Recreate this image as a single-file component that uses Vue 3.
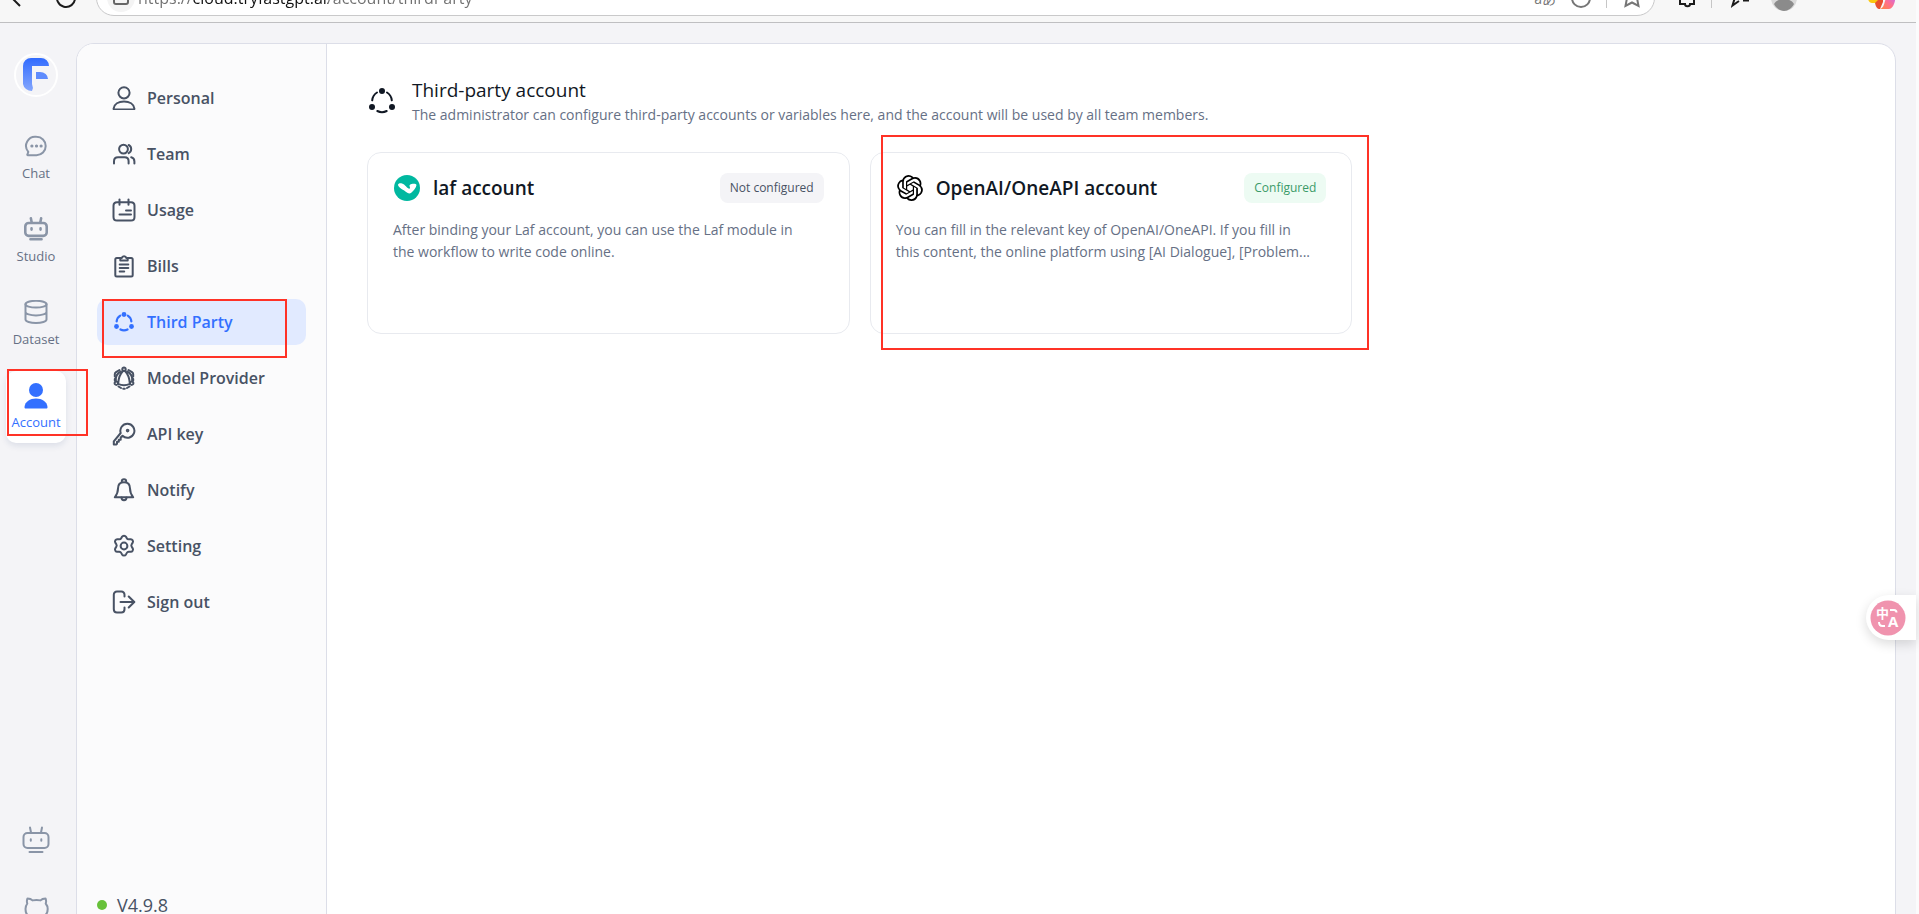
<script setup>
import { ref } from "vue";

const address = ref("https://cloud.tryfastgpt.ai/account/thirdParty");
const activeNav = ref("third");

// Outline icons, all drawn on a 24x24 box
const icons = {
  personal: ["M12 1.200a5.600 5.600 0 1 1 0 11.200 5.600 5.600 0 0 1 0-11.200z", "M1.600 22.600c.6-4.500 5-7 10.400-7s9.800 2.500 10.400 7c.1.600-.3 1-.9 1h-19c-.6 0-1-.4-.9-1z"],
  team: ["M11.500 2.700a4.400 4.400 0 1 1 0 8.800 4.400 4.400 0 0 1 0-8.800z", "M2 21.500v-2.300c0-2.500 1.600-4 4-4h6.600c2.400 0 4 1.500 4 4v2.300", "M16.700 3a4.600 4.600 0 0 1 0 8.200", "M19.200 15.200c2 .5 3.200 2 3.200 4.200v2"],
  usage: ["M5 4.200h14c2.400 0 3.500 1.300 3.500 3.500v11.200c0 2.200-1.100 3.600-3.500 3.600H5c-2.400 0-3.500-1.400-3.500-3.600V7.700c0-2.200 1.100-3.500 3.500-3.500z", "M7.500 1.500v5.200", "M16.500 1.500v5.200", "M14 12.500h5", "M7.500 16.500H19"],
  bills: ["M8 4H4.800c-.9 0-1.500.6-1.500 1.500v15.400c0 .9.600 1.500 1.500 1.500h14.400c.9 0 1.500-.6 1.500-1.500V5.500c0-.9-.6-1.500-1.500-1.500H16", "M8.300 6.500V4h1.500a2.300 2.300 0 0 1 4.500 0h1.400v2.500z", "M7.700 10.500h8.600", "M7.700 14h8.600", "M7.700 17.500h4.500"],
  model: [
    "M10.300 3.200a1.700 1.700 0 1 0 3.400 0 1.700 1.700 0 1 0-3.400 0z",
    "M2.600 17.200a1.700 1.700 0 1 0 3.400 0 1.700 1.700 0 1 0-3.400 0z",
    "M18 17.200a1.700 1.700 0 1 0 3.400 0 1.700 1.700 0 1 0-3.400 0z",
    "M7.500 4L4 6.200c-.8.500-1.200 1-1.200 2v2.300",
    "M16.500 4L20 6.200c.8.500 1.200 1 1.200 2v2.300",
    "M2.800 13v1.500M21.200 13v1.500",
    "M6.500 20.500L9 22M17.500 20.500L15 22M11.200 22.700h1.600",
    "M11 5C8.300 7.800 6.600 12 6.300 16.800",
    "M13 5c2.700 2.800 4.400 7 4.700 11.800",
    "M6 17.800c3.600 1.600 8.400 1.600 12 0",
    "M8.800 5.500C5 7.500 3.300 11 3.800 15",
    "M15.200 5.500C19 7.500 20.700 11 20.200 15",
  ],
  key: ["M15.300 1.800a7 7 0 1 1-4.800 12L8.700 15.500v2.200H6.800v2H5v2l-.8.8H1.800v-3.200L8.700 11A7 7 0 0 1 15.300 1.800z", "M15.600 7.800a.8.8 0 1 1 0 1.600.8.8 0 0 1 0-1.600z"],
  notify: ["M9.800 3.500a2.200 2.200 0 1 1 4.400 0", "M12 4.200c-4 0-6 2.600-6 6.300 0 4-1 6-3.200 8.800h18.400C19 16.500 18 14.500 18 10.500c0-3.700-2-6.300-6-6.300z", "M9.500 19.500a2.500 2.700 0 0 0 5 0"],
  setting: ["M12 8.600a3.400 3.400 0 1 1 0 6.800 3.400 3.400 0 0 1 0-6.800z", "M10 2.700c.8-1.400 3.200-1.400 4 0l.8 1.500c.4.800 1.300 1.200 2.200 1.100l1.700-.1c1.600-.1 2.900 2 2 3.400l-1 1.600c-.5.800-.5 1.800 0 2.600l1 1.600c.9 1.400-.4 3.500-2 3.400l-1.700-.1c-.9-.1-1.800.4-2.200 1.200l-.8 1.500c-.8 1.400-3.200 1.400-4 0l-.8-1.500c-.4-.8-1.300-1.300-2.200-1.200l-1.700.1c-1.600.1-2.900-2-2-3.400l1-1.600c.5-.8.5-1.800 0-2.600l-1-1.600c-.9-1.400.4-3.500 2-3.400l1.700.1c.9.100 1.800-.3 2.200-1.100z"],
  signout: ["M12.500 6.500V4.800c0-2-1.200-3.200-3.200-3.200H5c-2 0-3.200 1.200-3.200 3.200v14.400c0 2 1.200 3.200 3.200 3.200h4.300c2 0 3.200-1.200 3.200-3.200v-1.700", "M8.500 12h13.700", "M16.700 6.500l5.600 5.500-5.600 5.500"],
};

const navItems = [
  { key: "personal", label: "Personal" },
  { key: "team", label: "Team" },
  { key: "usage", label: "Usage" },
  { key: "bills", label: "Bills" },
  { key: "third", label: "Third Party" },
  { key: "model", label: "Model Provider" },
  { key: "key", label: "API key" },
  { key: "notify", label: "Notify" },
  { key: "setting", label: "Setting" },
  { key: "signout", label: "Sign out" },
];
</script>

<template>
  <div class="app">
    <!-- Browser toolbar -->
    <header class="chrome">
      <div class="toolbar">
        <button type="button" class="tool" aria-label="Back">
          <svg width="24" height="24" viewBox="0 0 24 24"><path d="M12 4l-8 8 8 8M4 12h16" /></svg>
        </button>
        <button type="button" class="tool reload" aria-label="Reload">
          <svg width="24" height="24" viewBox="0 0 24 24"><path d="M21 12a9 9 0 1 1-3-6.700M18 1v5h-5" /></svg>
        </button>
        <div class="address">
          <span class="lock">
            <svg width="18" height="24" viewBox="0 0 18 24"><path d="M2 9h14v7c0 1.300-.7 2-2 2H4c-1.300 0-2-.7-2-2zM5 9V5h8v4" /></svg>
          </span>
          <input v-model="address" type="text" aria-label="Address" spellcheck="false" />
          <button type="button" class="tool lang" aria-label="Translate page">aあ</button>
          <button type="button" class="tool grey" aria-label="Site status">
            <svg width="24" height="24" viewBox="0 0 24 24"><circle cx="12" cy="12" r="9" /></svg>
          </button>
          <span class="divider"></span>
          <button type="button" class="tool grey" aria-label="Add to favorites">
            <svg width="24" height="24" viewBox="0 0 24 24"><path d="M12 0l3 6 5 1-3 5 1.500 8L12 16.500 5.500 20 7 12 4 7l5-1z" /></svg>
          </button>
        </div>
        <button type="button" class="tool extensions" aria-label="Extensions">
          <svg width="24" height="24" viewBox="0 0 24 24"><path d="M5 4h14v5c3 0 3 4 0 4v5h-4c0 3-5 3-5 0H5v-5c-2 0-2-4 0-4z" /></svg>
        </button>
        <span class="divider"></span>
        <button type="button" class="tool" aria-label="Favorites">
          <svg width="24" height="24" viewBox="0 0 24 24"><path d="M8 8L4.500 19.500 11 15M15 14.500h6M13 9h9" /></svg>
        </button>
        <button type="button" class="tool" aria-label="Profile">
          <svg width="28" height="28" viewBox="0 0 28 28" class="filled">
            <circle cx="14" cy="14" r="13" fill="#d9d9d9" />
            <path d="M4 20c2-3.500 6-5 10-5s8 1.500 10 5c-2 4-6 7-10 7s-8-3-10-7z" fill="#8b8b8b" />
          </svg>
        </button>
        <button type="button" class="tool copilot" aria-label="Copilot">
          <svg width="28" height="28" viewBox="0 0 28 28" class="filled">
            <defs>
              <linearGradient id="copilot" x1="1" y1="0" x2="0" y2="1">
                <stop offset="0" stop-color="#c76bf0" />
                <stop offset="0.5" stop-color="#ff6f8d" />
                <stop offset="1" stop-color="#ff8a3d" />
              </linearGradient>
            </defs>
            <path d="M0 14h13l-3 5H4c-2 0-4-2-4-5z" fill="#fbc80f" />
            <path d="M7 19l5-5h3v4l-3 7c-3 0-4-2-5-6z" fill="#e8502f" />
            <path d="M27 12c1 5-2 13-6 13h-9c3-1 4-4 5-8l2-5z" fill="url(#copilot)" />
          </svg>
        </button>
      </div>
    </header>

    <div class="workspace">
      <aside class="sidebar">
        <a href="#" class="logo" aria-label="FastGPT">
          <svg width="28" height="36" viewBox="0 0 28 36">
            <defs>
              <linearGradient id="brand" x1="0" y1="0" x2="0" y2="1">
                <stop offset="0" stop-color="#316bfe" />
                <stop offset="1" stop-color="#84a6fd" />
              </linearGradient>
            </defs>
            <path d="M1 9a8 8 0 0 1 8-8h10a8 8 0 0 1 8 8H10v18a8 8 0 0 1 0 7A9 8 0 0 1 1 27z" fill="url(#brand)" />
            <path d="M14 15h4a8 7 0 0 1 8 7H14z" fill="#5e8bfd" />
          </svg>
        </a>
        <nav class="main-nav">
          <a href="#" class="main-item">
            <svg width="24" height="24" viewBox="0 0 24 24">
              <path d="M12.500 2.800a9.200 9.200 0 1 1 0 18.400H3.800c-.4 0-.6-.3-.4-.7l.9-2.600A9.200 9.200 0 0 1 12.500 2.800z" />
              <path d="M7.800 12h.2M12.400 12h.2M17 12h.2" class="thick" />
            </svg>
            <span>Chat</span>
          </a>
          <a href="#" class="main-item">
            <svg width="24" height="24" viewBox="0 0 28 28" class="robot">
              <rect x="1.500" y="7" width="25" height="15" rx="4" />
              <path d="M8 1.500l1 5M20 1.500l-1 5M8.800 13.300v1.400M19.300 13.300v1.400M7.500 26h13" />
            </svg>
            <span>Studio</span>
          </a>
          <a href="#" class="main-item">
            <svg width="24" height="24" viewBox="0 0 24 24">
              <ellipse cx="12" cy="4.200" rx="10.500" ry="3.400" />
              <path d="M1.500 4.200v15.400c0 1.900 4.700 3.400 10.500 3.400s10.500-1.500 10.500-3.400V4.200M1.500 12c0 1.900 4.700 3.400 10.500 3.400s10.500-1.500 10.500-3.400" />
            </svg>
            <span>Dataset</span>
          </a>
          <a href="#" class="main-item active">
            <svg width="24" height="26" viewBox="0 0 24 26" class="filled">
              <circle cx="12" cy="7" r="7" />
              <path d="M.5 24c.6-5.500 5.500-8.500 11.500-8.500S22.900 18.500 23.500 24c0 1-.4 1.500-1.300 1.500H1.800C.9 25.500.5 25 .5 24z" />
            </svg>
            <span>Account</span>
            <i class="mark mark-account"></i>
          </a>
        </nav>
        <div class="side-bottom">
          <a href="#" class="side-link" aria-label="Assistant">
            <svg width="28" height="28" viewBox="0 0 28 28">
              <rect x="1.500" y="7" width="25" height="15" rx="4" />
              <path d="M8 1.500l1 5M20 1.500l-1 5M8.800 13.300v1.400M19.300 13.300v1.400M7.500 26h13" />
            </svg>
          </a>
          <a href="#" class="side-link" aria-label="GitHub">
            <svg width="28" height="28" viewBox="0 0 28 28">
              <path d="M5.500 2.500c2 0 4 .8 5 1.900 2.500-.6 5.500-.6 8 0 1-1.100 3-1.900 5-1.900.7 1.700.8 3.500.2 5 1.300 1.600 2 3.500 2 5.500 0 6-4.500 8-8 8.500v4.500h-7V21.500c-3.500-.5-7.200-2.500-7.200-8.500 0-2 .6-3.900 1.800-5.500-.6-1.500-.5-3.300.2-5z" />
            </svg>
          </a>
        </div>
      </aside>

      <div class="panel">
        <div class="account-nav">
          <nav class="nav-list">
            <a
              v-for="item in navItems"
              :key="item.key"
              href="#"
              class="nav-item"
              :class="{ active: activeNav === item.key }"
              @click.prevent="activeNav = item.key"
            >
              <svg v-if="item.key === 'third'" class="orbit" width="24" height="24" viewBox="-2 -2 32 32">
                <path d="M4.200 13.300A10.300 10.300 0 0 1 9 5.500M19 5.500a10.300 10.300 0 0 1 4.800 7.800M9.300 24a10.300 10.300 0 0 0 9.400 0" />
                <circle cx="14" cy="4" r="3.200" />
                <circle cx="4" cy="20" r="3.200" />
                <circle cx="24" cy="20" r="3.200" />
              </svg>
              <svg v-else width="24" height="24" viewBox="0 0 24 24" :class="item.key">
                <path v-for="d in icons[item.key]" :key="d" :d="d" />
              </svg>
              <span>{{ item.label }}</span>
              <i v-if="item.key === 'third'" class="mark mark-nav"></i>
            </a>
          </nav>
          <div class="version"><span class="dot"></span>V4.9.8</div>
        </div>

        <main class="content">
          <div class="heading">
            <svg class="orbit" width="30" height="30" viewBox="-1 -1 30 30">
              <path d="M4.200 13.300A10.300 10.300 0 0 1 9 5.500M19 5.500a10.300 10.300 0 0 1 4.800 7.800M9.300 24a10.300 10.300 0 0 0 9.400 0" />
              <circle cx="14" cy="4" r="3" />
              <circle cx="4" cy="20" r="3" />
              <circle cx="24" cy="20" r="3" />
            </svg>
            <div>
              <h1>Third-party account</h1>
              <p>The administrator can configure third-party accounts or variables here, and the account will be used by all team members.</p>
            </div>
          </div>

          <div class="cards">
            <section class="card">
              <div class="card-head">
                <svg width="28" height="28" viewBox="0 0 28 28">
                  <circle cx="14" cy="14" r="13" fill="#00b8a0" />
                  <path d="M5 11c0-1.500 2-2 4-1.500 3 .7 5 5 7.500 5.300C18 13 15.500 12.500 17 10.800c2-1.600 6.500-1.200 6.500.2-.5 3-3 5.500-5 7.500-1.300 1.200-3.500 1.200-5-.2C11 16 5.500 14 5 11z" fill="#fff" />
                </svg>
                <h2>laf account</h2>
                <span class="badge">Not configured</span>
              </div>
              <p>After binding your Laf account, you can use the Laf module in the workflow to write code online.</p>
            </section>

            <section class="card">
              <div class="card-head">
                <svg width="28" height="28" viewBox="-1 -1 26 26">
                  <path
                    d="M22.2819 9.8211a5.9847 5.9847 0 0 0-.5157-4.9108 6.0462 6.0462 0 0 0-6.5098-2.9A6.0651 6.0651 0 0 0 4.9807 4.1818a5.9847 5.9847 0 0 0-3.9977 2.9 6.0462 6.0462 0 0 0 .7427 7.0966 5.98 5.98 0 0 0 .511 4.9107 6.051 6.051 0 0 0 6.5146 2.9001A5.9847 5.9847 0 0 0 13.2599 24a6.0557 6.0557 0 0 0 5.7718-4.2058 5.9894 5.9894 0 0 0 3.9977-2.9001 6.0557 6.0557 0 0 0-.7475-7.0729zm-9.022 12.6081a4.4755 4.4755 0 0 1-2.8764-1.0408l.1419-.0804 4.7783-2.7582a.7948.7948 0 0 0 .3927-.6813v-6.7369l2.02 1.1686a.071.071 0 0 1 .038.052v5.5826a4.504 4.504 0 0 1-4.4945 4.4944zm-9.6607-4.1254a4.4708 4.4708 0 0 1-.5346-3.0137l.142.0852 4.783 2.7582a.7712.7712 0 0 0 .7806 0l5.8428-3.3685v2.3324a.0804.0804 0 0 1-.0332.0615L9.74 19.9502a4.4992 4.4992 0 0 1-6.1408-1.6464zM2.3408 7.8956a4.485 4.485 0 0 1 2.3655-1.9728V11.6a.7664.7664 0 0 0 .3879.6765l5.8144 3.3543-2.0201 1.1685a.0757.0757 0 0 1-.071 0l-4.8303-2.7865A4.504 4.504 0 0 1 2.3408 7.872zm16.5963 3.8558L13.1038 8.364 15.1192 7.2a.0757.0757 0 0 1 .071 0l4.8303 2.7913a4.4944 4.4944 0 0 1-.6765 8.1042v-5.6772a.79.79 0 0 0-.407-.667zm2.0107-3.0231l-.142-.0852-4.7735-2.7818a.7759.7759 0 0 0-.7854 0L9.409 9.2297V6.8974a.0662.0662 0 0 1 .0284-.0615l4.8303-2.7866a4.4992 4.4992 0 0 1 6.6802 4.66zM8.3065 12.863l-2.02-1.1638a.0804.0804 0 0 1-.038-.0567V6.0742a4.4992 4.4992 0 0 1 7.3757-3.4537l-.142.0805L8.704 5.459a.7948.7948 0 0 0-.3927.6813zm1.0976-2.3654l2.602-1.4998 2.6069 1.4998v2.9994l-2.5974 1.4997-2.6067-1.4997Z"
                  />
                </svg>
                <h2>OpenAI/OneAPI account</h2>
                <span class="badge success">Configured</span>
              </div>
              <p>You can fill in the relevant key of OpenAI/OneAPI. If you fill in this content, the online platform using [AI Dialogue], [Problem...</p>
              <i class="mark mark-card"></i>
            </section>
          </div>
        </main>
      </div>
    </div>

    <button type="button" class="translate" aria-label="Translate">
      <svg width="36" height="36" viewBox="0 0 36 36">
        <circle cx="18" cy="18" r="17.500" fill="#f093ae" />
        <text x="6" y="18" font-size="13">中</text>
        <text x="18" y="27" font-size="15">A</text>
        <path d="M20 10h4c1.500 0 2.500 1 2.500 2.500M9 22c0 2.500 1 4 3.500 4H15" />
      </svg>
    </button>
  </div>
</template>

<style>
body {
  overflow: hidden;
}
</style>

<style scoped>
.app {
  display: flex;
  flex-direction: column;
  box-sizing: border-box;
  height: 100vh;
  overflow: hidden;
  border-right: 3px solid #fbfbfc;
  background: #f4f4f7;
  color: #485264;
  font-family: "Segoe UI", "Open Sans", "Noto Sans", "Noto Sans CJK SC", sans-serif;
}

.app * {
  box-sizing: border-box;
}

a {
  color: inherit;
  text-decoration: none;
}

button {
  padding: 0;
  border: 0;
  background: none;
  font-family: inherit;
}

svg {
  flex: none;
  display: block;
}

h1,
h2,
p {
  margin: 0;
}

/* Browser toolbar */
.chrome {
  flex: none;
  display: flex;
  align-items: flex-end;
  height: 23px;
  overflow: hidden;
  border-bottom: 1px solid #bfbfc1;
  background: #f7f7f7;
}

.toolbar {
  flex: 1;
  display: flex;
  align-items: center;
  height: 48px;
  padding: 0 20px 0 8px;
}

.tool {
  flex: none;
  color: #1b1b1b;
}

.tool svg {
  fill: none;
  stroke: currentColor;
  stroke-width: 2;
}

.tool .filled {
  stroke: none;
}

.tool.grey {
  color: #767676;
}

.reload {
  margin-left: 22px;
}

.address {
  flex: 1;
  display: flex;
  align-items: center;
  gap: 13px;
  height: 36px;
  margin: 0 20px 0 18px;
  padding: 0 10px;
  border: 1px solid #c9c9ca;
  border-radius: 18px;
  background: #fff;
}

.lock {
  display: flex;
  align-items: center;
  justify-content: center;
  width: 28px;
  height: 28px;
  margin-right: -10px;
  border-radius: 14px;
  background: #f4f4f4;
}

.lock svg {
  fill: none;
  stroke: #666;
  stroke-width: 2;
}

.address input {
  flex: 1;
  min-width: 0;
  padding: 0;
  border: 0;
  outline: 0;
  background: linear-gradient(90deg, #707070 55px, #111 55px, #111 190px, #707070 190px);
  -webkit-background-clip: text;
  background-clip: text;
  color: transparent;
  font-family: inherit;
  font-size: 16px;
}

.lang {
  color: #767676;
  font-size: 14px;
}

.divider {
  flex: none;
  width: 1px;
  height: 20px;
  background: #c6c6c6;
}

.extensions {
  margin-right: 12px;
}

.toolbar > .divider + .tool {
  margin: 0 18px 0 16px;
}

.copilot {
  margin-left: 70px;
}

/* Sidebar */
.workspace {
  flex: 0 0 100vh;
  display: flex;
}

.sidebar {
  position: relative;
  z-index: 1;
  flex: none;
  display: flex;
  flex-direction: column;
  align-items: center;
  width: 76px;
  padding: 30px 4px 5px 0;
}

.logo {
  display: flex;
  align-items: center;
  justify-content: center;
  width: 44px;
  height: 44px;
  border: 2px solid #fff;
  border-radius: 22px;
}

.main-nav {
  display: flex;
  flex-direction: column;
  gap: 11px;
  margin-top: 25px;
}

.main-item {
  position: relative;
  display: flex;
  flex-direction: column;
  align-items: center;
  justify-content: space-between;
  width: 60px;
  height: 72px;
  padding: 12px 0;
  border-radius: 10px;
  color: #667085;
  font-size: 13px;
  line-height: 18px;
}

.main-item svg,
.side-link svg {
  fill: none;
  stroke: #8a95a7;
  stroke-width: 2;
  stroke-linecap: round;
  stroke-linejoin: round;
}

.main-item .robot {
  stroke-width: 3;
}

.main-item .thick {
  stroke-width: 3;
}

.main-item.active {
  background: #fff;
  box-shadow: 0 3px 6px rgba(19, 51, 107, 0.1);
  color: #3370ff;
}

.main-item .filled {
  fill: #3370ff;
  stroke: none;
}

.side-bottom {
  display: flex;
  flex-direction: column;
  gap: 26px;
  margin-top: auto;
}

.side-link {
  display: flex;
  align-items: center;
  justify-content: center;
  width: 44px;
  height: 44px;
}

/* Panel */
.panel {
  flex: 1;
  display: flex;
  min-width: 0;
  margin: 20px 20px 0 0;
  overflow: hidden;
  border: 1px solid #dcdee8;
  border-radius: 18px;
  background: #fff;
}

.account-nav {
  flex: none;
  display: flex;
  flex-direction: column;
  justify-content: space-between;
  width: 250px;
  padding: 31px 20px 22px;
  border-right: 1px solid #dcdee8;
  background: #fbfbfc;
}

.nav-list {
  display: flex;
  flex-direction: column;
  gap: 10px;
}

.nav-item {
  position: relative;
  display: flex;
  align-items: center;
  gap: 11px;
  height: 46px;
  padding: 0 15px;
  border-radius: 10px;
  font-size: 16px;
  font-weight: 600;
}

.nav-item svg {
  fill: none;
  stroke: currentColor;
  stroke-width: 2;
  stroke-linecap: round;
  stroke-linejoin: round;
}

.nav-item .orbit {
  stroke-width: 3;
}

.nav-item.active {
  background: #e1eaff;
  color: #3370ff;
}

.orbit {
  fill: none;
  stroke: currentColor;
  stroke-width: 2;
  stroke-linecap: round;
}

.orbit circle {
  fill: currentColor;
  stroke: none;
}

.version {
  display: flex;
  align-items: center;
  gap: 10px;
  font-size: 18px;
  line-height: 18px;
}

.dot {
  width: 10px;
  height: 10px;
  border-radius: 5px;
  background: #67c13a;
}

/* Content */
.content {
  flex: 1;
  min-width: 0;
  padding: 32px 40px;
}

.heading {
  display: flex;
  align-items: center;
  gap: 15px;
  color: #111824;
}

.heading h1 {
  font-size: 19px;
  font-weight: 400;
  line-height: 28px;
}

.heading p,
.card p {
  color: #667085;
  font-size: 14px;
  line-height: 22px;
}

.cards {
  display: grid;
  grid-template-columns: repeat(3, 1fr);
  gap: 20px;
  margin-top: 26px;
}

.card {
  position: relative;
  height: 182px;
  padding: 20px 25px;
  border: 1px solid #e8eaef;
  border-radius: 14px;
}

.card p {
  padding-right: 11px;
}

.card-head {
  display: flex;
  align-items: center;
  gap: 12px;
  margin-bottom: 16px;
}

.card h2 {
  flex: 1;
  color: #111824;
  font-size: 19px;
  font-weight: 600;
  line-height: 28px;
}

.badge {
  padding: 0 10px;
  border-radius: 8px;
  background: #f4f4f7;
  color: #485264;
  font-size: 12px;
  line-height: 30px;
}

.badge.success {
  background: #edfbf3;
  color: #3b9a68;
}

/* Highlight frames */
.mark {
  position: absolute;
  z-index: 2;
  border: 2px solid #ff3226;
  pointer-events: none;
}

.mark-account {
  top: -2px;
  left: 1px;
  width: 81px;
  height: 67px;
}

.mark-nav {
  top: 0;
  left: 5px;
  width: 185px;
  height: 59px;
}

.mark-card {
  top: -18px;
  right: -18px;
  bottom: -17px;
  left: 10px;
}

/* Floating translate tab */
.translate {
  position: absolute;
  top: 595px;
  right: 3px;
  display: flex;
  align-items: center;
  width: 50px;
  height: 45px;
  padding-left: 4px;
  border-radius: 23px 0 0 23px;
  background: #fff;
  box-shadow: 0 4px 12px rgba(0, 0, 0, 0.14);
}

.translate text {
  fill: #fff;
  font-family: "Open Sans", "Noto Sans CJK SC", sans-serif;
  font-weight: 700;
}

.translate path {
  fill: none;
  stroke: #fff;
  stroke-width: 2;
}
</style>
